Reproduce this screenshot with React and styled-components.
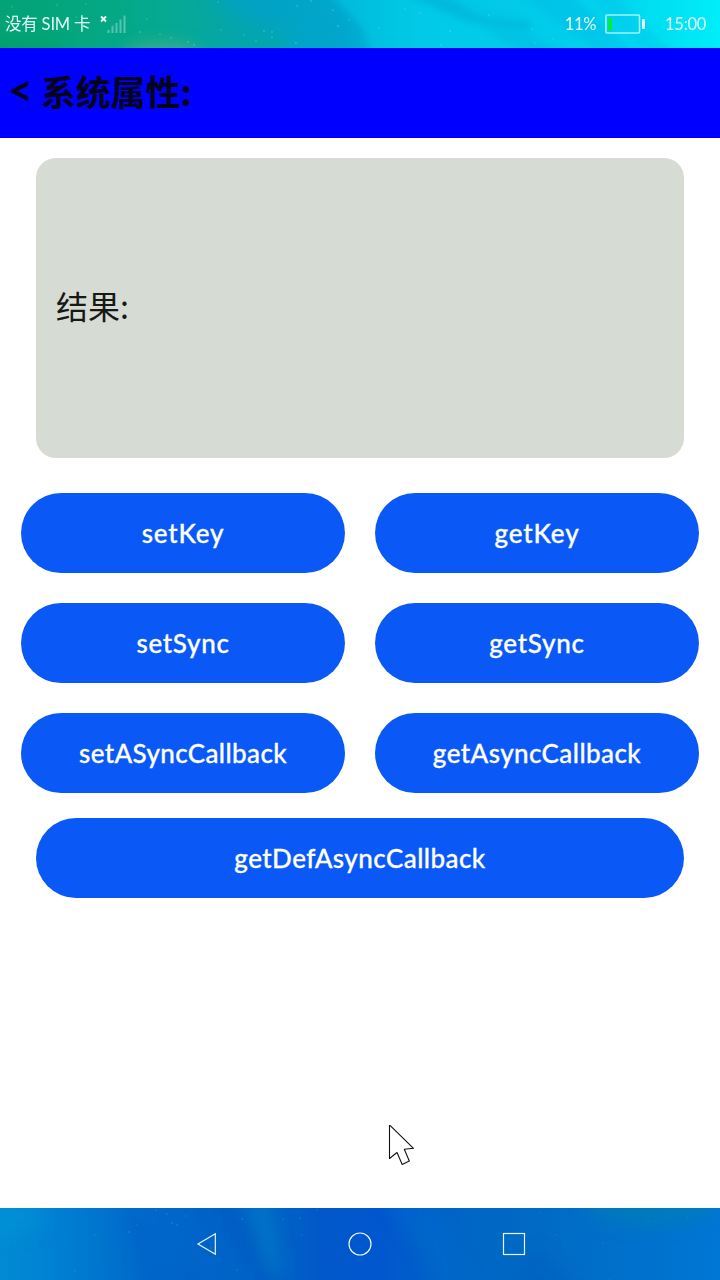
import React from "react";
import styled, { createGlobalStyle } from "styled-components";

const GlobalStyle = createGlobalStyle`
  * { box-sizing: border-box; }
  body {
    margin: 0;
    background: #fff;
    font-family: Lato, "Noto Sans CJK SC", sans-serif;
  }
`;

const Screen = styled.div`
  position: relative;
  display: flex;
  flex-direction: column;
  width: 720px;
  height: 1280px;
  overflow: hidden;
  background: #fff;
`;

const Wallpaper = styled.svg`
  position: absolute;
  inset: 0;
  width: 100%;
  height: 100%;
`;

const StatusBar = styled.div`
  position: relative;
  display: flex;
  align-items: center;
  flex: none;
  height: 48px;
  padding: 0 14px 0 5px;
  overflow: hidden;
  color: #e4fafa;
  line-height: 24px;
  background: linear-gradient(90deg, #04a276 0, #04a884 110px, #06a996 180px, #04a5b4 260px, #03a8cf 340px, #02c4e4 420px, #01cdeb 560px, #00def2 650px, #00edf9 720px);
`;

const StatusText = styled.span`
  position: relative;
  white-space: pre;
  font-size: 16.5px;
  letter-spacing: ${(p) => p.$spacing || 0}px;
  margin-right: ${(p) => p.$gap || 0}px;
`;

const Signal = styled.svg`
  position: relative;
  width: 28px;
  height: 20px;
  margin-right: auto;
`;

const Battery = styled.svg`
  position: relative;
  width: 41px;
  height: 20px;
  margin-right: 19px;
`;

const Header = styled.header`
  display: flex;
  align-items: center;
  flex: none;
  height: 90px;
  padding: 0 10px 4px;
  background: #0000ff;
  color: #03031c;
  font-size: 35px;
  font-weight: 700;
  line-height: 50px;
`;

const BackMark = styled.span`
  width: 31px;
  padding-bottom: 2px;
  font-family: Lato, sans-serif;
  font-size: 43px;
  text-indent: -2px;
`;

const Title = styled.h1`
  margin: 0;
  font: inherit;
  font-family: "Noto Sans CJK SC", sans-serif;
  letter-spacing: -0.2px;
`;

const Main = styled.main`
  display: flex;
  flex: 1;
  flex-direction: column;
  padding: 20px 21px 0;
`;

const ResultPanel = styled.section`
  display: flex;
  align-items: center;
  height: 300px;
  margin: 0 15px 35px;
  padding: 0 20px 6px;
  border-radius: 20px;
  background: #d6dbd4;
  color: #171817;
  font-family: "Noto Sans CJK SC", sans-serif;
  font-size: 32px;
  line-height: 46px;
`;

const ButtonGrid = styled.div`
  display: grid;
  grid-template-columns: 324px 324px;
  gap: 30px;
`;

const PillButton = styled.button`
  display: flex;
  align-items: center;
  justify-content: center;
  height: 80px;
  margin: ${(p) => (p.$wide ? "25px 15px 0" : "0")};
  padding: 0 0 1px;
  border: 0;
  border-radius: 40px;
  background: #0a59f7;
  color: #fff;
  font-family: Lato, sans-serif;
  font-size: 26px;
  font-weight: 500;
  letter-spacing: ${(p) => p.$spacing}px;
  -webkit-text-stroke: 0.3px #fff;
`;

const NavBar = styled.nav`
  position: relative;
  display: flex;
  align-items: center;
  justify-content: center;
  gap: 130px;
  flex: none;
  height: 72px;
  overflow: hidden;
  background: linear-gradient(90deg, #008cd4 0, #007fd2 60px, #006dcb 130px, #0063c8 200px, #0066c5 265px, #0058c9 320px, #0057ce 380px, #0064c6 450px, #006bc4 540px, #0070cb 620px, #0077d4 720px);
`;

const NavIcon = styled.svg`
  position: relative;
  width: 24px;
  height: 24px;
  fill: none;
  stroke: #e8f4ff;
  stroke-width: 1.2;
`;

const Pointer = styled.svg`
  position: absolute;
  left: 387px;
  top: 1123px;
  width: 30px;
  height: 44px;
`;

const topStars = [
  [12, 7, 0.3], [57, 5, 0.35], [76, 17, 0.3], [86, 4, 0.3], [113, 26, 0.35],
  [140, 32, 0.5], [147, 19, 0.3], [160, 34, 0.35], [171, 38, 0.4], [188, 42, 0.5],
  [194, 45, 0.5], [218, 2, 0.35], [221, 30, 0.3], [244, 35, 0.35], [256, 41, 0.4],
  [264, 31, 0.5], [272, 32, 0.5], [272, 37, 0.4], [296, 43, 0.5], [297, 6, 0.4],
  [311, 1, 0.5], [333, 10, 0.5], [338, 26, 0.6], [349, 20, 0.3], [379, 28, 0.4],
  [405, 9, 0.35], [420, 13, 0.35], [441, 45, 0.4], [450, 31, 0.5], [489, 15, 0.5],
  [532, 29, 0.4], [535, 43, 0.3], [553, 39, 0.3],
];

const bottomStars = [
  [15, 34, 0.25], [75, 63, 0.35], [95, 27, 0.35], [129, 24, 0.5], [137, 17, 0.3],
  [156, 2, 0.4], [167, 6, 0.4], [172, 15, 0.5], [177, 17, 0.5], [186, 8, 0.3],
  [211, 40, 0.4], [237, 62, 0.3], [242, 11, 0.5], [283, 11, 0.3], [300, 10, 0.4],
  [302, 27, 0.3], [317, 2, 0.3], [540, 5, 0.25], [556, 27, 0.25], [603, 35, 0.3],
  [648, 13, 0.3], [687, 9, 0.25], [610, 71, 0.25],
];

function Stars({ points, color }) {
  return points.map(([x, y, o]) => (
    <circle key={`${x}-${y}`} cx={x} cy={y} r="0.8" fill={color} opacity={o} />
  ));
}

function SkyTop() {
  return (
    <Wallpaper viewBox="0 0 720 48" aria-hidden="true">
      <defs>
        <filter id="softTop" filterUnits="userSpaceOnUse" x="-60" y="-60" width="840" height="170">
          <feGaussianBlur stdDeviation="8" />
        </filter>
        <filter id="edgeTop" filterUnits="userSpaceOnUse" x="-60" y="-60" width="840" height="170">
          <feGaussianBlur stdDeviation="3.5" />
        </filter>
      </defs>
      <g filter="url(#softTop)">
        <path d="M195-30H345L300 12L265 26L225 10Z" fill="#03a0cd" opacity=".6" />
        <ellipse cx="162" cy="54" rx="38" ry="12" fill="#48b08f" opacity=".7" />
        <path d="M-20 42H60V70H-20Z" fill="#009e62" opacity=".6" />
        <path d="M240 38H285V70H240Z" fill="#06a9a2" opacity=".5" />
        <path d="M285 10L340 10L365 60H290Z" fill="#00a4cc" opacity=".5" />
      </g>
      <g filter="url(#edgeTop)">
        <path d="M325-10H400L470 20L560 65H378L362 27Z" fill="#00d0ea" opacity=".45" />
        <path d="M370-20H420L480 16L530 21V32L465 22Z" fill="#00aed6" opacity=".5" />
        <path d="M500-20H555L650 65H615Z" fill="#00b7e4" opacity=".4" />
        <path d="M575-20H600L690 70H660Z" fill="#00c6e8" opacity=".45" />
        <path d="M480 28L530 36L570 60H540Z" fill="#00b4dc" opacity=".4" />
      </g>
      <Stars points={topStars} color="#8af2d0" />
    </Wallpaper>
  );
}

function SkyBottom() {
  return (
    <Wallpaper viewBox="0 0 720 72" aria-hidden="true">
      <defs>
        <filter id="softBottom" filterUnits="userSpaceOnUse" x="-60" y="-60" width="840" height="200">
          <feGaussianBlur stdDeviation="8" />
        </filter>
      </defs>
      <g filter="url(#softBottom)">
        <ellipse cx="15" cy="8" rx="30" ry="20" fill="#0097d8" opacity=".35" />
        <path d="M120 0L145 10L190 95H150Z" fill="#0055c2" opacity=".25" />
        <path d="M205-20H226L290 95H262Z" fill="#0052c2" opacity=".45" />
        <path d="M244-20H266L284 65H268Z" fill="#0083cb" opacity=".45" />
        <path d="M375-20H425L480 90H450Z" fill="#006fd2" opacity=".3" />
        <ellipse cx="650" cy="-4" rx="65" ry="22" fill="#007eb5" opacity=".65" />
        <path d="M495 90L535 40L590 90Z" fill="#005bc2" opacity=".5" />
      </g>
      <Stars points={bottomStars} color="#37b5e8" />
    </Wallpaper>
  );
}

const actions = [
  { label: "setKey", spacing: 0.8 },
  { label: "getKey", spacing: 0.9 },
  { label: "setSync", spacing: 0.7 },
  { label: "getSync", spacing: 0.75 },
  { label: "setASyncCallback", spacing: 0.38 },
  { label: "getAsyncCallback", spacing: 0.42 },
];

export default function App() {
  return (
    <Screen>
      <GlobalStyle />
      <StatusBar>
        <SkyTop />
        <StatusText $gap={9} $spacing={-0.2}>
          没有 SIM 卡
        </StatusText>
        <Signal viewBox="0 0 28 20">
          <path d="M2 2.5L7 7.5M7 2.5L2 7.5" stroke="#f4ffff" strokeWidth="1.8" />
          <g fill="#fff" opacity=".33">
            <rect x="8.5" y="16" width="2" height="3" />
            <rect x="12.5" y="12.5" width="2" height="6.5" />
            <rect x="16.5" y="9" width="2" height="10" />
            <rect x="20.5" y="5.5" width="2" height="13.5" />
            <rect x="24.5" y="1.5" width="2" height="17.5" />
          </g>
        </Signal>
        <StatusText $gap={9} $spacing={-0.3}>11%</StatusText>
        <Battery viewBox="0 0 41 20">
          <rect x="0.9" y="1" width="33.6" height="18" rx="1" fill="none" stroke="#a3effb" strokeWidth="1.6" />
          <rect x="3.5" y="4" width="3.3" height="12.5" fill="#00f51c" />
          <rect x="37" y="5" width="3" height="10" rx="0.7" fill="#e0fbff" />
        </Battery>
        <StatusText $spacing={-0.3}>15:00</StatusText>
      </StatusBar>
      <Header>
        <BackMark>&lt;</BackMark>
        <Title>系统属性:</Title>
      </Header>
      <Main>
        <ResultPanel>结果:</ResultPanel>
        <ButtonGrid>
          {actions.map((a) => (
            <PillButton key={a.label} $spacing={a.spacing}>
              {a.label}
            </PillButton>
          ))}
        </ButtonGrid>
        <PillButton $wide $spacing={0.45}>
          getDefAsyncCallback
        </PillButton>
      </Main>
      <NavBar>
        <SkyBottom />
        <NavIcon viewBox="0 0 24 24">
          <path d="M4 12L21.3 1.7V22.3Z" />
        </NavIcon>
        <NavIcon viewBox="0 0 24 24">
          <circle cx="12" cy="12" r="11" />
        </NavIcon>
        <NavIcon viewBox="0 0 24 24">
          <rect x="1.5" y="1.5" width="21" height="21" />
        </NavIcon>
      </NavBar>
      <Pointer viewBox="0 0 30 44">
        <path d="M2.5 2.5V35.5L10 29.5L15.2 41.5L22.3 38L17.3 26.2L26.5 25.3L3.5 2.8Z" fill="#fff" stroke="#111" strokeWidth="1.1" strokeLinejoin="round" />
      </Pointer>
    </Screen>
  );
}
